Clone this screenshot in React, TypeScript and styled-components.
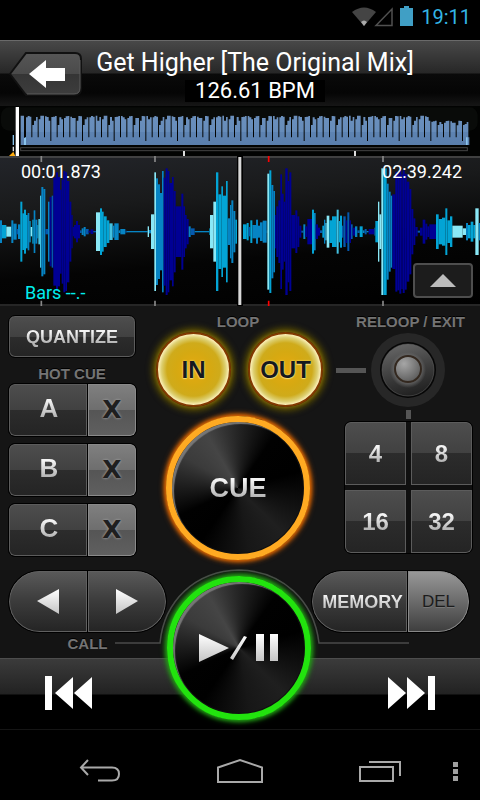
import React from "react";
import styled, { createGlobalStyle, css } from "styled-components";

const GlobalStyle = createGlobalStyle`
  * { box-sizing: border-box; }
  body { margin: 0; background: #000; }
  button { border: 0; padding: 0; margin: 0; background: none; font: inherit; color: inherit; cursor: pointer; }
  svg { display: block; }
`;

const roboto = `Roboto, "Noto Sans", sans-serif`;
const arial = `"Liberation Sans", Arial, sans-serif`;

/* ---------- page shell ---------- */

const Page = styled.div`
  min-height: 100vh;
  display: flex;
  flex-direction: column;
  background: #000;
  color: #fff;
  font-family: ${arial};
`;

const StatusBar = styled.div`
  height: 40px;
  display: flex;
  align-items: center;
  justify-content: flex-end;
  padding: 0 9px 6px 0;
  color: #33b5e5;
  font: 20px/24px ${roboto};
`;

const StatusIcons = styled.svg`
  width: 62px;
  height: 22px;
  margin-right: 8px;
`;

const Header = styled.header`
  height: 66px;
  display: flex;
  align-items: center;
  padding: 0 52px 0 9px;
  border-top: 1px solid #6a6a6a;
  background: linear-gradient(#484848 0, #272727 32px, #0a0a0a 33px, #050505 52px, #161616 100%);
`;

const BackButton = styled.button`
  flex: none;
  width: 73px;
  height: 44px;
`;

const TitleBlock = styled.div`
  flex: 1;
  display: flex;
  flex-direction: column;
  align-items: center;
  font-family: ${roboto};
  white-space: nowrap;
`;

const Title = styled.h1`
  margin: 0;
  font-size: 25px;
  line-height: 34px;
  font-weight: 400;
`;

const Bpm = styled.div`
  padding: 0 10px;
  background: #000;
  font-size: 22px;
  line-height: 22px;
`;

/* ---------- waveforms ---------- */

const Overview = styled.svg`
  width: 100%;
  height: 50px;
  background: #020302;
`;

const WavePanel = styled.section`
  position: relative;
  height: 150px;
  display: flex;
  flex-direction: column;
  justify-content: space-between;
  padding: 6px 7px 2px 21px;
  background: linear-gradient(175deg, #23252a 0, #191a1b 30%, #040404 65%, #000 100%);
  font: 18px/20px ${roboto};
`;

const WaveDrawing = styled.svg`
  position: absolute;
  inset: 0;
  width: 100%;
  height: 100%;
`;

const WaveRow = styled.div`
  position: relative;
  display: flex;
  justify-content: space-between;
  align-items: flex-end;
`;

const Remaining = styled.span`
  margin-right: 11px;
`;

const Bars = styled.span`
  margin-left: 4px;
  color: #00eeee;
  line-height: 22px;
`;

const ExpandButton = styled.button`
  display: grid;
  place-items: center;
  width: 60px;
  height: 35px;
  margin-bottom: 6px;
  border: 2px solid #4e4e4e;
  border-radius: 4px;
  background: #1c1c1c;
`;

/* ---------- deck controls ---------- */

const Deck = styled.section`
  display: grid;
  grid-template-columns: 132px 1fr 136px;
  height: 264px;
  padding: 9px 8px 0;
  background: #151515;
`;

const Column = styled.div<{ $center?: boolean }>`
  display: flex;
  flex-direction: column;
  align-items: ${(p) => (p.$center ? "center" : "flex-start")};
`;

const Caption = styled.div`
  color: #747474;
  font-size: 15px;
  line-height: 15px;
  font-weight: 700;
  text-shadow: 0 -1px 0 #000;
  white-space: nowrap;
`;

const DeckCaption = styled(Caption)`
  line-height: 13px;
`;

const HotCueCaption = styled(Caption)`
  width: 128px;
  padding: 8px 0 2px;
  text-align: center;
`;

const RightCaption = styled(DeckCaption)`
  align-self: flex-end;
  margin-right: 7px;
`;

const darkFace = css`
  background: linear-gradient(#4e4e4e 0, #414141 50%, #2c2c2c 50%, #242424 100%);
  box-shadow: inset 0 0 0 1px #5c5c5c;
`;

const lightFace = css`
  background: linear-gradient(#808080 0, #6e6e6e 50%, #555 50%, #606060 100%);
  box-shadow: inset 0 0 0 1px #8a8a8a;
`;

const engraved = css`
  background-image: linear-gradient(#f4f4f4 25%, #b4b4b4 80%);
  background-clip: text;
  color: transparent;
`;

const KeyText = styled.span<{ $size: number }>`
  ${engraved}
  font-size: ${(p) => p.$size}px;
  line-height: 28px;
  font-weight: 700;
`;

const QuantizeButton = styled.button`
  ${darkFace}
  width: 128px;
  height: 43px;
  border: 1px solid #000;
  border-radius: 7px;
`;

const HotCueRow = styled.div`
  display: flex;
  gap: 1px;
  width: 129px;
  height: 54px;
  margin-bottom: 6px;
  border: 1px solid #000;
  border-radius: 7px;
  background: #000;
  overflow: hidden;
`;

const HotCueButton = styled.button`
  ${darkFace}
  flex: 1;
  padding: 0 0 4px 2px;
  border-radius: 6px 0 0 6px;
`;

const ClearButton = styled.button`
  ${lightFace}
  width: 48px;
  border-radius: 0 6px 6px 0;
  color: #1f1f1f;
  font: 700 25px/28px "DejaVu Sans", sans-serif;
  text-shadow: 0 0 2px #999, 0 0 3px #999;
`;

const LoopRow = styled.div`
  display: flex;
  gap: 17px;
  margin: 4px 0 9px 3px;
`;

const LoopButton = styled.button`
  width: 75px;
  height: 75px;
  border: 2px solid #833a00;
  border-radius: 50%;
  background: radial-gradient(circle closest-side, #e7a90f 0, #d5a912 50%, #cfab1b 75%, #ddcf70 90%, #fff3bd 100%);
  box-shadow: 0 0 3px 1px #77600b, 0 0 6px 4px #5c5000;
  color: #15191f;
  font-size: 24px;
  line-height: 28px;
  font-weight: 700;
  text-shadow: 0 0 2px #ffe98a, 0 1px 1px #f3db70;
`;

const RoundButton = styled.button<{ $ring: string; $glow: string }>`
  position: relative;
  width: 144px;
  height: 144px;
  display: grid;
  place-items: center;
  border: 6px solid ${(p) => p.$ring};
  border-radius: 50%;
  background: conic-gradient(
    from 0deg at 50% 50%,
    #242424 0deg,
    #010101 35deg,
    #000 75deg,
    #1f1f1f 135deg,
    #171717 170deg,
    #000 215deg,
    #010101 245deg,
    #3b3b3b 300deg,
    #454545 330deg,
    #242424 360deg
  );
  background-clip: padding-box;
  box-shadow:
    0 0 4px 1px ${(p) => p.$glow},
    0 0 6px 1px ${(p) => p.$glow},
    inset 3px 3px 1px -1px #777,
    inset 0 0 0 1px #111;
`;

const CueText = styled.span`
  ${engraved}
  font-size: 27px;
  line-height: 32px;
  font-weight: 700;
`;

const KnobRow = styled.div`
  display: flex;
  align-items: center;
  gap: 5px;
  margin-top: 5px;
`;

const Dash = styled.div`
  width: 30px;
  height: 5px;
  background: #555;
`;

const Stem = styled.div`
  width: 5px;
  height: 9px;
  margin: 3px 0 2px 70px;
  background: #555;
`;

const KnobButton = styled.button`
  width: 74px;
  height: 74px;
`;

const BeatPad = styled.div`
  display: grid;
  grid-template-columns: 1fr 1fr;
  gap: 5px;
  width: 129px;
  height: 133px;
  margin-left: 8px;
  border: 1px solid #000;
  border-radius: 7px;
  background: #101010;
  overflow: hidden;
`;

const BeatButton = styled.button`
  ${darkFace}
  &:first-child { border-radius: 6px 0 0 0; }
  &:nth-child(2) { border-radius: 0 6px 0 0; }
  &:nth-child(3) { border-radius: 0 0 0 6px; }
  &:last-child { border-radius: 0 0 6px 0; }
`;

/* ---------- transport ---------- */

const Transport = styled.section`
  display: grid;
  grid-template-columns: 159px 1fr 159px;
  grid-template-rows: 88px 72px;
  background: linear-gradient(#141414 88px, #000 88px);
  padding: 0 10px 0 8px;
`;

const PillCell = styled.div<{ $column: number }>`
  grid-row: 1;
  grid-column: ${(p) => p.$column};
  position: relative;
  z-index: 1;
`;

const Pill = styled.div`
  display: flex;
  gap: 1px;
  height: 63px;
  border: 1px solid #000;
  border-radius: 32px;
  background: #000;
  overflow: hidden;
`;

const PillButton = styled.button<{ $side: "left" | "right"; $light?: boolean; $narrow?: boolean }>`
  flex: ${(p) => (p.$narrow ? "0 0 61px" : "1")};
  display: flex;
  align-items: center;
  justify-content: center;
  border-radius: ${(p) => (p.$side === "left" ? "31px 0 0 31px" : "0 31px 31px 0")};
  background: ${(p) =>
    p.$light ? "linear-gradient(#999 0, #6b6b6b 50%, #3d3d3d 100%)" : "linear-gradient(#5a5a5a 0, #3b3b3b 50%, #242424 100%)"};
  box-shadow: inset 0 0 0 1px ${(p) => (p.$light ? "#888" : "#606060")};
`;

const MemoryText = styled(KeyText)`
  margin-left: 6px;
`;

const DelText = styled.span`
  color: #1c1c1c;
  font-size: 17px;
  line-height: 28px;
  text-shadow: 0 1px 0 #777;
`;

const CallCaption = styled(Caption)`
  padding-top: 3px;
  text-align: center;
`;

const SkipBar = styled.div`
  grid-row: 2;
  grid-column: 1 / -1;
  display: flex;
  justify-content: space-between;
  margin: 0 -10px 0 -8px;
  padding: 0 40px;
  border-top: 1px solid #4d4d4d;
  border-bottom: 1px solid #151515;
  background: linear-gradient(#3b3b3b 0, #222 35px, #000 36px);
`;

const SkipButton = styled.button`
  display: grid;
  place-items: center;
  width: 58px;
  height: 68px;
`;

const PlayCell = styled.div`
  grid-row: 1 / -1;
  grid-column: 2;
  position: relative;
  display: flex;
  justify-content: center;
  padding-top: 6px;
`;

const CallLine = styled.svg`
  position: absolute;
  top: -3px;
  left: 50%;
  width: 294px;
  height: 80px;
  margin-left: -124px;
`;

const NavBar = styled.nav`
  flex: 1;
  display: grid;
  grid-template-columns: 1fr 1fr 1fr 30px;
  align-items: start;
  padding-left: 30px;
`;

const NavButton = styled.button<{ $edge?: boolean }>`
  display: grid;
  place-items: center ${(p) => (p.$edge ? "start" : "center")};
  height: 68px;
  padding: ${(p) => (p.$edge ? "14px 0 0 3px" : "14px 0 0")};
`;

/* ---------- drawing data ---------- */

const tones: Record<string, string> = {
  l: "#8ae8f6",
  s: "#43c1e1",
  c: "#03a4d5",
  m: "#0684c4",
  b: "#0459ae",
  n: "#000094",
};

/* start, half height and tone; each bar runs to the start of the next */
const leftWave =
  "0 34m,6 20c,19 15l,34 34m,40 24m,50 8b,54 22m,61 90c,67 55c,72 66c,78 50c,83 56m,88 32c,92 14l,97 36c,101 64m,106 36m,112 20c,115 38s,120 108s,124 134m,130 128m,136 8b,144 90m,149 104n,155 108b,160 162n,168 178n,174 164n,180 126n,185 156n,190 182n,196 178n,201 152n,208 90n,214 50n,218 14n,222 20n,228 32n,234 20n,240 4b,245 10m,251 14m,257 8b,266 3n,272 7n,280 2b,288 58l,300 70c,306 60c,311 46c,320 34c,328 25s,338 18m,343 25m,356 4m,361 8m,376 3b,380 2m,443 16l,447 5m,453 52l,463 178l,468 160m,474 142m,480 116m,486 182m,491 162n,497 190n,503 182n,508 146n,516 164n,521 122n,527 76n,544 114n,550 76n,555 50n,560 38n,566 16m,572 10b,584 2m,628 10c,630 50l,640 90l,648 178c,655 112c,664 136c,669 108c,678 152c,683 40m,690 80m,694 94m,700 62m,706 36c,711 0c";
const rightWave =
  "9 22c,20 26c,26 14b,31 34c,37 20m,48 36m,54 18m,60 28m,68 33m,80 4m,82 174l,88 184c,94 140m,100 122m,105 50n,109 76n,115 94n,121 172n,126 114n,131 90n,136 190n,143 152n,148 178n,154 50n,166 64n,172 46n,178 18n,184 3b,190 22m,196 16n,202 38n,216 66c,222 56m,227 22n,234 12n,240 4b,247 18c,252 36m,256 26s,260 48l,268 34c,276 46c,290 66s,296 32c,300 48c,306 18b,310 46b,317 34n,322 58b,328 34n,333 22b,338 12n,345 16m,352 4b,359 16c,368 4m,374 8b,380 2m,386 8n,403 12b,406 32c,414 90l,418 52l,424 190l,430 190c,440 144m,446 120m,452 108m,457 112n,466 180n,472 176n,478 186n,484 172n,488 184n,494 174n,500 150n,508 128n,514 68n,520 40n,526 14n,533 3b,540 12n,548 36n,556 24n,562 16n,568 22n,588 52c,596 38c,606 42c,616 70c,622 34c,630 46c,637 18l,668 10l,678 26m,684 20c,692 30c,700 20c,706 70l,716 26m,720 0c";

const parseWave = (source: string, offset: number) => {
  const points = source.split(",").map((item) => {
    const [x, rest] = item.split(" ");
    return { x: Number(x) + offset, half: parseInt(rest, 10), tone: rest.slice(-1) };
  });
  return points.slice(0, -1).map((p, i) => ({ ...p, width: points[i + 1].x - p.x }));
};

const waveBars = [...parseWave(leftWave, 0), ...parseWave(rightWave, 720)];

/* track overview: a block of steady beats with a narrow notch between each */
const overviewPath = (() => {
  const tops = [30, 36, 32, 44, 30, 34, 29, 40, 31, 33];
  let d = "M62 117V29H72V95H78V30";
  let x = 78;
  let beat = 0;
  while (x < 1396) {
    const late = x > 1280 ? 14 : 0;
    const a = tops[(beat * 3) % 10] + late;
    const b = tops[(beat * 7 + 2) % 10] + late;
    const c = beat % 4 === 1 ? 57 : tops[(beat + 5) % 10] + late;
    const notch = beat % 5 === 3 ? 105 : 94;
    d += `V${c}h5V${a}h6V${b}h5V${notch}h3`;
    x += 19;
    beat += 1;
  }
  return d + "V117Z";
})();

const cues = [
  { x: 124, color: "#888" },
  { x: 465, color: "#888" },
  { x: 806, color: "#f00" },
  { x: 1149, color: "#888" },
];

/* ---------- pieces ---------- */

const TrackOverview = () => (
  <Overview viewBox="0 0 1440 150" preserveAspectRatio="none" aria-label="Track overview">
    <defs>
      <linearGradient id="overviewFill" x1="0" y1="0" x2="0" y2="1">
        <stop offset="0" stopColor="#6b90bd" />
        <stop offset="0.55" stopColor="#668cba" />
        <stop offset="0.56" stopColor="#5d83b2" />
        <stop offset="1" stopColor="#5a7eac" />
      </linearGradient>
    </defs>
    <rect x="3" y="4" width="1430" height="70" rx="24" fill="#090b09" />
    <path d={overviewPath} fill="url(#overviewFill)" />
    <path d="M72 117V97l6-4v24zM38 117V87h4v30zM1398 117V94h5v23z" fill="#8ac4ec" />
    <rect x="62" y="125" width="1340" height="9" fill="#050505" stroke="#444" strokeWidth="3" />
    <path d="M38 122h4v14h-4zM549 135h6v15h-6zM1062 135h6v15h-6z" fill="#ddd" />
    <path d="M27 150l13-13 6 13z" fill="#ffad10" />
    <rect x="47" y="3" width="10" height="147" fill="#fff" />
  </Overview>
);

const Waveform = () => (
  <WaveDrawing viewBox="0 0 1440 450" preserveAspectRatio="none" aria-hidden="true">
    <path d="M0 3h1440" stroke="#4c4c4c" strokeWidth="4" />
    <path d="M0 447h1440" stroke="#333" strokeWidth="4" />
    {waveBars.map((bar, i) => (
      <rect key={i} x={bar.x} y={227 - bar.half} width={bar.width} height={bar.half * 2} fill={tones[bar.tone]} />
    ))}
    {cues.map((cue) => (
      <path key={cue.x} d={`M${cue.x} 0v18M${cue.x} 434v16`} stroke={cue.color} strokeWidth="5" />
    ))}
    <rect x="711" y="0" width="18" height="450" fill="#000" />
    <rect x="715" y="3" width="9" height="444" fill="#d8d8d8" />
  </WaveDrawing>
);

const Skip = ({ back }: { back?: boolean }) => (
  <svg width="48" height="34" viewBox="0 0 48 34" fill="#fff" aria-hidden="true">
    {back ? <path d="M0 0h7v34H0zM28 1v32L10 17zM47 1v32L29 17z" /> : <path d="M41 0h7v34h-7zM20 1v32l18-16zM1 1v32l18-16z" />}
  </svg>
);

const silver = (id: string) => (
  <linearGradient id={id} x1="0" y1="0" x2="0" y2="1">
    <stop offset="0" stopColor="#fff" />
    <stop offset="1" stopColor="#c4c4c4" />
  </linearGradient>
);

export default function App() {
  return (
    <Page>
      <GlobalStyle />
      <StatusBar>
        <StatusIcons viewBox="0 0 62 22" aria-hidden="true">
          <path d="M1 6Q13-3 25 6L13 20z" fill="#444" />
          <path d="M10 16q3-3 6 0l-3 4z" fill="#aaa" />
          <path d="M41 3v16.500H25z" fill="none" stroke="#505050" strokeWidth="1.500" />
          <path d="M49 2h4V0h5v2h4v18H49z" fill="#409fc5" />
        </StatusIcons>
        <time>19:11</time>
      </StatusBar>

      <Header>
        <BackButton aria-label="Back to browse">
          <svg width="73" height="44" viewBox="0 0 73 44">
            <defs>
              <linearGradient id="backFace" x1="0" y1="0" x2="0" y2="1">
                <stop offset="0" stopColor="#565656" />
                <stop offset="0.5" stopColor="#4a4a4a" />
                <stop offset="0.51" stopColor="#353535" />
                <stop offset="1" stopColor="#3d3d3d" />
              </linearGradient>
            </defs>
            <path d="M17 1h49q6 0 6 6v30q0 6-6 6H17L1 22z" fill="url(#backFace)" stroke="#111" strokeWidth="2" />
            <path d="M18 42h47q6 0 6-6V8" fill="none" stroke="#5c5c5c" />
            <path d="M20 22L37 8v8h19v13H37v7z" fill="#fff" />
          </svg>
        </BackButton>
        <TitleBlock>
          <Title>Get Higher [The Original Mix]</Title>
          <Bpm>126.61 BPM</Bpm>
        </TitleBlock>
      </Header>

      <TrackOverview />

      <WavePanel>
        <Waveform />
        <WaveRow>
          <span>00:01.873</span>
          <Remaining>02:39.242</Remaining>
        </WaveRow>
        <WaveRow>
          <Bars>Bars --.-</Bars>
          <ExpandButton aria-label="Expand">
            <svg width="26" height="13" viewBox="0 0 26 13">
              <path d="M13 0l13 13H0z" fill="#bbb" />
            </svg>
          </ExpandButton>
        </WaveRow>
      </WavePanel>

      <Deck>
        <Column>
          <QuantizeButton>
            <KeyText $size={18}>QUANTIZE</KeyText>
          </QuantizeButton>
          <HotCueCaption>HOT CUE</HotCueCaption>
          {["A", "B", "C"].map((name) => (
            <HotCueRow key={name}>
              <HotCueButton aria-label={`Hot cue ${name}`}>
                <KeyText $size={26}>{name}</KeyText>
              </HotCueButton>
              <ClearButton aria-label={`Clear hot cue ${name}`}>X</ClearButton>
            </HotCueRow>
          ))}
        </Column>

        <Column $center>
          <DeckCaption>LOOP</DeckCaption>
          <LoopRow>
            <LoopButton>IN</LoopButton>
            <LoopButton>OUT</LoopButton>
          </LoopRow>
          <RoundButton $ring="#ffaa22" $glow="#e86a00">
            <CueText>CUE</CueText>
          </RoundButton>
        </Column>

        <Column>
          <RightCaption>RELOOP / EXIT</RightCaption>
          <KnobRow>
            <Dash />
            <KnobButton aria-label="Reloop / Exit">
              <svg width="74" height="74" viewBox="0 0 74 74">
                <defs>
                  <linearGradient id="knobSide" x1="0.3" y1="0" x2="0.6" y2="1">
                    <stop offset="0" stopColor="#666" />
                    <stop offset="0.6" stopColor="#393939" />
                    <stop offset="1" stopColor="#202020" />
                  </linearGradient>
                  <radialGradient id="knobTop" cx="0.35" cy="0.3" r="0.7">
                    <stop offset="0" stopColor="#a6a6a6" />
                    <stop offset="1" stopColor="#606060" />
                  </radialGradient>
                  <radialGradient id="knobHalo">
                    <stop offset="0.7" stopColor="#777" stopOpacity="0.7" />
                    <stop offset="1" stopColor="#777" stopOpacity="0" />
                  </radialGradient>
                </defs>
                <circle cx="37" cy="37" r="37" fill="#272727" />
                <circle cx="37" cy="37" r="28" fill="#060606" />
                <circle cx="37" cy="37" r="26" fill="url(#knobSide)" stroke="#686868" strokeOpacity="0.5" />
                <circle cx="37" cy="37" r="18" fill="url(#knobHalo)" />
                <circle cx="37" cy="36" r="13" fill="url(#knobTop)" stroke="#33281f" strokeWidth="2" />
              </svg>
            </KnobButton>
          </KnobRow>
          <Stem />
          <BeatPad>
            {[4, 8, 16, 32].map((beats) => (
              <BeatButton key={beats}>
                <KeyText $size={24}>{beats}</KeyText>
              </BeatButton>
            ))}
          </BeatPad>
        </Column>
      </Deck>

      <Transport>
        <SkipBar>
          <SkipButton aria-label="Previous track">
            <Skip back />
          </SkipButton>
          <SkipButton aria-label="Next track">
            <Skip />
          </SkipButton>
        </SkipBar>

        <PillCell $column={1}>
          <Pill>
            <PillButton $side="left" aria-label="Call previous">
              <svg width="22" height="25" viewBox="0 0 22 25">
                <defs>{silver("callBack")}</defs>
                <path d="M22 0v25L0 12z" fill="url(#callBack)" />
              </svg>
            </PillButton>
            <PillButton $side="right" aria-label="Call next">
              <svg width="22" height="25" viewBox="0 0 22 25">
                <defs>{silver("callNext")}</defs>
                <path d="M0 0v25l22-13z" fill="url(#callNext)" />
              </svg>
            </PillButton>
          </Pill>
          <CallCaption>CALL</CallCaption>
        </PillCell>

        <PlayCell>
          <CallLine viewBox="0 0 294 80" aria-hidden="true">
            <path d="M0 76H45C49 34 80 4 124 3C168 4 199 34 204 76H294" fill="none" stroke="#4a4a4a" strokeWidth="1.500" />
          </CallLine>
          <RoundButton $ring="#22e30e" $glow="#22a015" aria-label="Play / Pause">
            <svg width="80" height="30" viewBox="0 0 80 30">
              <defs>{silver("playFace")}</defs>
              <path
                d="M0 1v28l30-14zM31 25L45 3l3 1-14 23zM57 1h8v27h-8zM71 1h8v27h-8z"
                fill="url(#playFace)"
              />
            </svg>
          </RoundButton>
        </PlayCell>

        <PillCell $column={3}>
          <Pill>
            <PillButton $side="left">
              <MemoryText $size={18}>MEMORY</MemoryText>
            </PillButton>
            <PillButton $side="right" $light $narrow>
              <DelText>DEL</DelText>
            </PillButton>
          </Pill>
        </PillCell>
      </Transport>

      <NavBar>
        <NavButton aria-label="Back">
          <svg width="42" height="24" viewBox="0 0 42 24" fill="none" stroke="#a9a9a9" strokeWidth="2">
            <path d="M9 1L2 8.500L9 16M2 8.500H33q7 0 7 6.500t-7 6.500H19" />
          </svg>
        </NavButton>
        <NavButton aria-label="Home">
          <svg width="46" height="26" viewBox="0 0 46 26" fill="none" stroke="#a9a9a9" strokeWidth="2">
            <path d="M1 9.500L23 2l22 7.500V24H1z" />
          </svg>
        </NavButton>
        <NavButton aria-label="Recent apps">
          <svg width="44" height="24" viewBox="0 0 44 24" fill="none" stroke="#a9a9a9" strokeWidth="2">
            <path d="M2 8h33v14H2zM11 3h31v14" />
          </svg>
        </NavButton>
        <NavButton $edge aria-label="Menu">
          <svg width="5" height="19" viewBox="0 0 5 19" fill="#a0a0a0">
            <path d="M0 0h5v5H0zM0 7h5v5H0zM0 14h5v5H0z" />
          </svg>
        </NavButton>
      </NavBar>
    </Page>
  );
}
